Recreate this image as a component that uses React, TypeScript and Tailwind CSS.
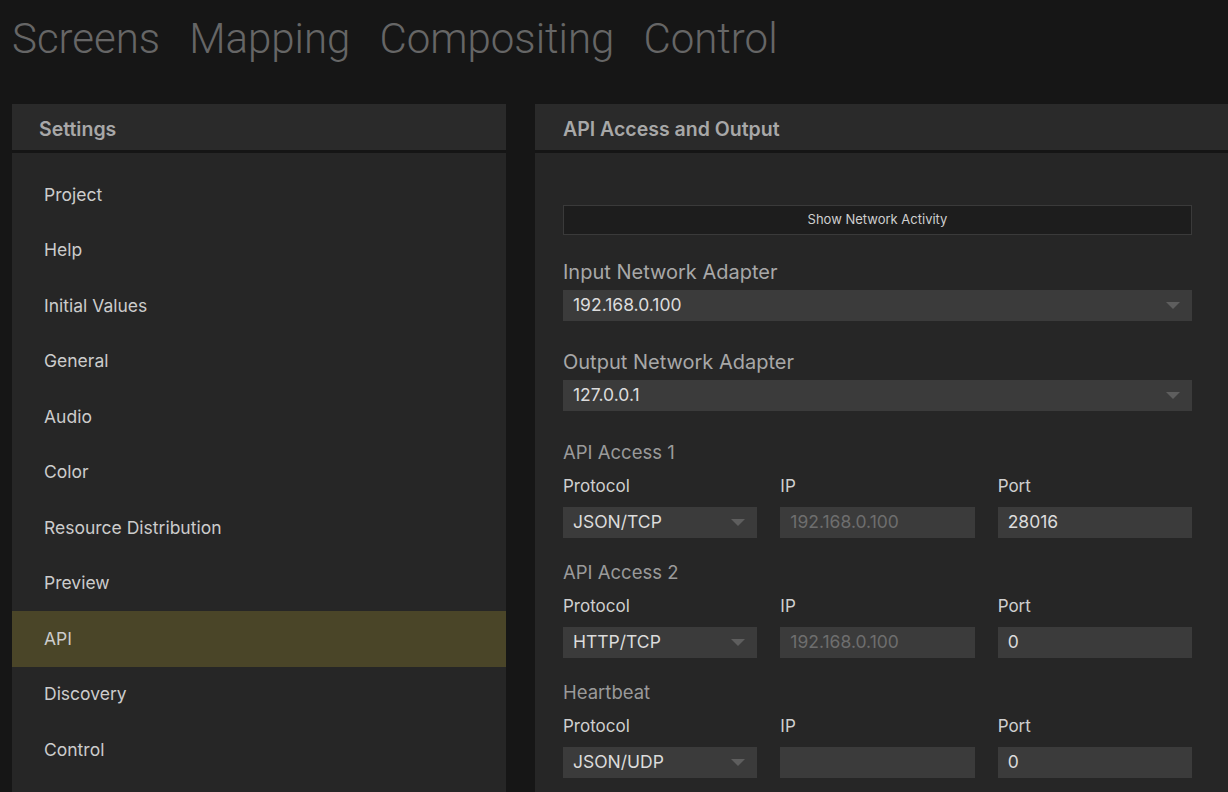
import { useState } from "react";

const navItems = ["Screens", "Mapping", "Compositing", "Control"];

const settingsItems = [
  "Project",
  "Help",
  "Initial Values",
  "General",
  "Audio",
  "Color",
  "Resource Distribution",
  "Preview",
  "API",
  "Discovery",
  "Control",
];

function Caret() {
  return (
    <svg width="14" height="8" viewBox="0 0 14 8" className="shrink-0">
      <path d="M0 0 L14 0 L7 7 Z" fill="#5e5e5e" />
    </svg>
  );
}

function Select({ value, className = "" }: { value: string; className?: string }) {
  return (
    <div
      className={`flex h-[31px] items-center justify-between bg-[#3b3b3b] pl-[10px] pr-[12px] text-[17.5px] text-[#dcdcdc] ${className}`}
    >
      <span>{value}</span>
      <Caret />
    </div>
  );
}

function Field({ value, muted }: { value: string; muted?: boolean }) {
  return (
    <div
      className={`flex h-[31px] items-center bg-[#3b3b3b] px-[10px] text-[17.5px] ${
        muted ? "text-[#6e6e6e]" : "text-[#dcdcdc]"
      }`}
    >
      {value}
    </div>
  );
}

function AccessGroup({
  title,
  protocol,
  ip,
  port,
}: {
  title: string;
  protocol: string;
  ip: string;
  port: string;
}) {
  return (
    <div className="flex flex-col">
      <div className="h-[36px] pt-[1px] text-[18.5px] leading-[24px] text-[#9a9a9a]">{title}</div>
      <div className="grid grid-cols-3 gap-x-[23px]">
        <div className="h-[32px] text-[17px] leading-[22px] text-[#cfcfcf]">Protocol</div>
        <div className="h-[32px] text-[17px] leading-[22px] text-[#cfcfcf]">IP</div>
        <div className="h-[32px] text-[17px] leading-[22px] text-[#cfcfcf]">Port</div>
        <Select value={protocol} />
        <Field value={ip} muted />
        <Field value={port} />
      </div>
    </div>
  );
}

export default function App() {
  const [active, setActive] = useState("API");

  return (
    <div
      className="flex h-[792px] w-[1228px] flex-col overflow-hidden bg-[#161616]"
      style={{ fontFamily: "Inter, 'Noto Sans', sans-serif" }}
    >
      <nav
        className="flex h-[104px] items-start gap-[29px] pl-[12px] pt-[14px]"
        style={{ fontFamily: "Roboto, sans-serif" }}
      >
        {navItems.map((n) => (
          <span key={n} className="text-[42px] font-light leading-[50px] text-[#666666]">
            {n}
          </span>
        ))}
      </nav>

      <div className="flex flex-1 gap-[29px] pl-[12px]">
        {/* Settings list */}
        <aside className="flex w-[494px] flex-col bg-[#262626]">
          <div className="flex h-[49px] items-center border-b-[3px] border-[#151515] bg-[#2a2a2a] pl-[27px] pt-[6px]">
            <span className="text-[19.5px] font-semibold text-[#a8a8a8]">Settings</span>
          </div>
          <ul className="flex flex-col pt-[14px]">
            {settingsItems.map((s) => (
              <li
                key={s}
                onClick={() => setActive(s)}
                className={`flex h-[55.5px] cursor-pointer items-center pl-[32px] text-[17.5px] text-[#cccccc] ${
                  active === s ? "bg-[#4a4528]" : ""
                }`}
              >
                {s}
              </li>
            ))}
          </ul>
        </aside>

        {/* API panel */}
        <section className="flex flex-1 flex-col bg-[#262626]">
          <div className="flex h-[49px] items-center border-b-[3px] border-[#151515] bg-[#2a2a2a] pl-[28px] pt-[6px]">
            <span className="text-[19.5px] font-semibold text-[#a8a8a8]">API Access and Output</span>
          </div>
          <div className="flex w-[657px] flex-col pl-[28px] pt-[52px]">
            <button className="h-[30px] w-[629px] border border-[#3a3a3a] bg-[#1d1d1d] text-[13px] text-[#cfcfcf]">
              Show Network Activity
            </button>

            <div className="mt-[25px] w-[629px]">
              <div className="h-[30px] text-[20px] leading-[24px] text-[#a8a8a8]">Input Network Adapter</div>
              <Select value="192.168.0.100" />
            </div>

            <div className="mt-[29px] w-[629px]">
              <div className="h-[30px] text-[20px] leading-[24px] text-[#a8a8a8]">Output Network Adapter</div>
              <Select value="127.0.0.1" />
            </div>

            <div className="mt-[28px] flex w-[629px] flex-col gap-[21px]">
              <AccessGroup title="API Access 1" protocol="JSON/TCP" ip="192.168.0.100" port="28016" />
              <AccessGroup title="API Access 2" protocol="HTTP/TCP" ip="192.168.0.100" port="0" />
              <AccessGroup title="Heartbeat" protocol="JSON/UDP" ip="" port="0" />
            </div>
          </div>
        </section>
      </div>
    </div>
  );
}
